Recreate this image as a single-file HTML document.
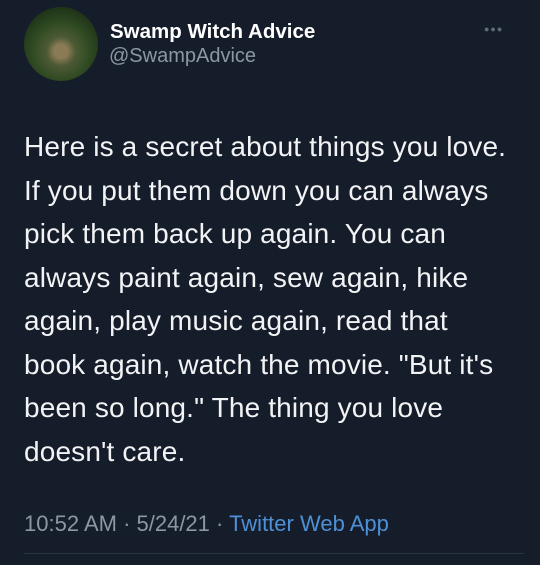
<!DOCTYPE html>
<html><head><meta charset="utf-8"><style>
html,body{margin:0;padding:0;}
body{width:540px;height:565px;background:#161d2a;font-family:"Liberation Sans",sans-serif;position:relative;overflow:hidden;color:#fff;}
.av{position:absolute;left:24px;top:7px;width:74px;height:74px;border-radius:50%;background:radial-gradient(circle at 50% 60%,#8a7a55 0 12%,#4d5a35 25%,#2f4a22 50%,#1f3418 75%);}
.name{position:absolute;left:110px;top:20px;font-size:20.5px;font-weight:bold;}
.handle{position:absolute;left:109px;top:45px;font-size:20px;color:#8b97a4;}
.dots{position:absolute;left:484px;top:24px;font-size:9px;color:#5f6a76;letter-spacing:1px;}
.body{position:absolute;left:24px;top:125px;font-size:28px;line-height:43.5px;letter-spacing:0.15px;white-space:nowrap;color:#f2f3f5;}
.foot{position:absolute;left:24px;top:511px;font-size:22px;color:#8b97a4;}
.foot span{color:#4d90d6;}
.sep{position:absolute;left:24px;right:16px;top:553px;height:1px;background:#2a3340;}
</style></head><body>
<div class="av"></div>
<div class="name">Swamp Witch Advice</div>
<div class="handle">@SwampAdvice</div>
<div class="dots">●●●</div>
<div class="body">Here is a secret about things you love.<br>If you put them down you can always<br>pick them back up again. You can<br>always paint again, sew again, hike<br>again, play music again, read that<br>book again, watch the movie. "But it's<br>been so long." The thing you love<br>doesn't care.</div>
<div class="foot">10:52 AM · 5/24/21 · <span>Twitter Web App</span></div>
<div class="sep"></div>
</body></html>
